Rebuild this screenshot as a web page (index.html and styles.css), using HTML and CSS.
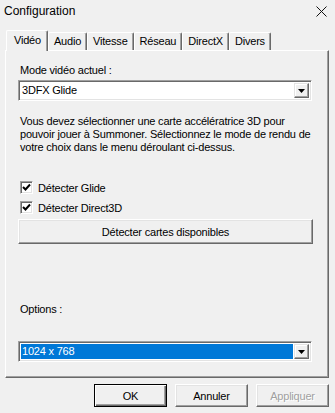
FILE: index.html
```html
<!DOCTYPE html>
<html lang="fr">
<head>
    <meta charset="UTF-8">
    <title>Configuration</title>
    <link rel="stylesheet" href="styles.css">
</head>
<body>

<div class="window">
    <!-- Title bar -->
    <div class="titlebar">
        <span class="title">Configuration</span>
        <svg class="close" width="11" height="11" viewBox="0 0 11 11">
            <path d="M0.5 0.5 L10.5 10.5 M10.5 0.5 L0.5 10.5" stroke="#111" stroke-width="1" fill="none"/>
        </svg>
    </div>

    <!-- Tabs -->
    <div class="tabs">
        <div class="tab active">Vidéo</div>
        <div class="tab">Audio</div>
        <div class="tab">Vitesse</div>
        <div class="tab">Réseau</div>
        <div class="tab">DirectX</div>
        <div class="tab">Divers</div>
    </div>

    <!-- Tab page -->
    <div class="panel">
        <div class="label">Mode vidéo actuel :</div>
        <div class="combo">
            <span class="combo-text">3DFX Glide</span>
            <span class="drop"><svg width="7" height="4" viewBox="0 0 7 4"><path d="M0 0 H7 L3.5 4 Z" fill="#000"/></svg></span>
        </div>

        <p class="info">Vous devez sélectionner une carte accélératrice 3D pour<br>pouvoir jouer à Summoner. Sélectionnez le mode de rendu de<br>votre choix dans le menu déroulant ci-dessus.</p>

        <div class="check first">
            <span class="box"><svg width="9" height="9" viewBox="0 0 9 9"><path d="M1 4 L3.5 6.5 L8 1.5" stroke="#000" stroke-width="2" fill="none"/></svg></span>
            Détecter Glide
        </div>
        <div class="check">
            <span class="box"><svg width="9" height="9" viewBox="0 0 9 9"><path d="M1 4 L3.5 6.5 L8 1.5" stroke="#000" stroke-width="2" fill="none"/></svg></span>
            Détecter Direct3D
        </div>

        <div class="btn wide">Détecter cartes disponibles</div>

        <div class="label options">Options :</div>
        <div class="combo focused">
            <span class="combo-text">1024 x 768</span>
            <span class="drop"><svg width="7" height="4" viewBox="0 0 7 4"><path d="M0 0 H7 L3.5 4 Z" fill="#000"/></svg></span>
        </div>
    </div>

    <!-- Dialog buttons -->
    <div class="actions">
        <div class="btn default">OK</div>
        <div class="btn">Annuler</div>
        <div class="btn disabled">Appliquer</div>
    </div>
</div>

</body>
</html>
```

FILE: styles.css
```css
body {
    margin: 0;
    padding: 0;
    background-color: #f0f0f0;
    font-family: "Liberation Sans", Arial, sans-serif;
    font-size: 11px;
    letter-spacing: -0.2px;
    color: #000;
}

.window {
    width: 335px;
    height: 413px;
    display: flex;
    flex-direction: column;
    background-color: #f0f0f0;
}

.titlebar {
    height: 22px;
    display: flex;
    align-items: center;
    justify-content: space-between;
    padding: 0 8px 0 4px;
}

.title {
    font-size: 12px;
    letter-spacing: 0;
    color: #000;
}

.close {
    display: block;
}

/* Tabs */
.tabs {
    display: flex;
    align-items: flex-end;
    margin: 8px 0 0 6px;
    height: 20px;
    position: relative;
    z-index: 1;
}

.tab {
    height: 17px;
    line-height: 17px;
    padding: 0 5px 0 5px;
    border-top: 1px solid #fff;
    border-left: 1px solid #fff;
    border-right: 1px solid #696969;
    box-shadow: inset -1px 0 0 #a0a0a0;
    border-radius: 2px 2px 0 0;
}

.tab.active {
    height: 20px;
    line-height: 19px;
    padding: 0 6px 0 7px;
    margin: 0 0 -1px 0;
    background-color: #f0f0f0;
}

/* Panel */
.panel {
    margin: 0 6px 0 5px;
    height: 328px;
    box-sizing: border-box;
    border: 1px solid;
    border-color: #fff #696969 #696969 #fff;
    box-shadow: inset -1px -1px 0 #a0a0a0;
    padding: 13px 16px 0 12px;
}

.label {
    padding-left: 2px;
    line-height: 13px;
}

.combo {
    margin-top: 3px;
    height: 21px;
    box-sizing: border-box;
    display: flex;
    align-items: center;
    border: 1px solid;
    border-color: #a0a0a0 #fff #fff #a0a0a0;
    box-shadow: inset 1px 1px 0 #696969, inset -1px -1px 0 #e3e3e3;
    background-color: #fff;
    padding: 2px;
}

.combo-text {
    flex: 1;
    padding-left: 1px;
    line-height: 15px;
}

.combo.focused {
    margin-top: 25px;
}

.combo.focused .combo-text {
    background-color: #0078d7;
    color: #fff;
    margin-right: 1px;
}

.drop {
    width: 15px;
    height: 15px;
    box-sizing: border-box;
    display: flex;
    align-items: center;
    justify-content: center;
    background-color: #f0f0f0;
    border: 1px solid;
    border-color: #e3e3e3 #696969 #696969 #e3e3e3;
    box-shadow: inset -1px -1px 0 #a0a0a0, inset 1px 1px 0 #fff;
}

.info {
    margin: 14px 0 0 2px;
    line-height: 13px;
    white-space: nowrap;
}

.check {
    display: flex;
    align-items: center;
    height: 13px;
    margin-top: 7px;
    padding-left: 2px;
}

.check.first {
    margin-top: 27px;
}

.box {
    width: 13px;
    height: 13px;
    box-sizing: border-box;
    display: flex;
    align-items: center;
    justify-content: center;
    background-color: #fff;
    border: 1px solid;
    border-color: #a0a0a0 #fff #fff #a0a0a0;
    box-shadow: inset 1px 1px 0 #696969, inset -1px -1px 0 #e3e3e3;
    margin-right: 5px;
}

.btn {
    height: 23px;
    box-sizing: border-box;
    display: flex;
    align-items: center;
    justify-content: center;
    background-color: #f0f0f0;
    border: 1px solid;
    border-color: #fff #696969 #696969 #fff;
    box-shadow: inset -1px -1px 0 #a0a0a0, inset 1px 1px 0 #e3e3e3;
}

.btn.wide {
    margin-top: 5px;
    height: 25px;
    width: 295px;
}

.options {
    margin-top: 59px;
}

/* Bottom buttons */
.actions {
    display: flex;
    justify-content: flex-end;
    gap: 8px;
    margin-top: 6px;
    padding-right: 6px;
}

.actions .btn {
    width: 73px;
}

.btn.default {
    border-color: #000;
    box-shadow: inset 1px 1px 0 #fff, inset -1px -1px 0 #696969, inset -2px -2px 0 #a0a0a0;
}

.btn.disabled {
    color: #a0a0a0;
    text-shadow: 1px 1px 0 #fff;
}
```
